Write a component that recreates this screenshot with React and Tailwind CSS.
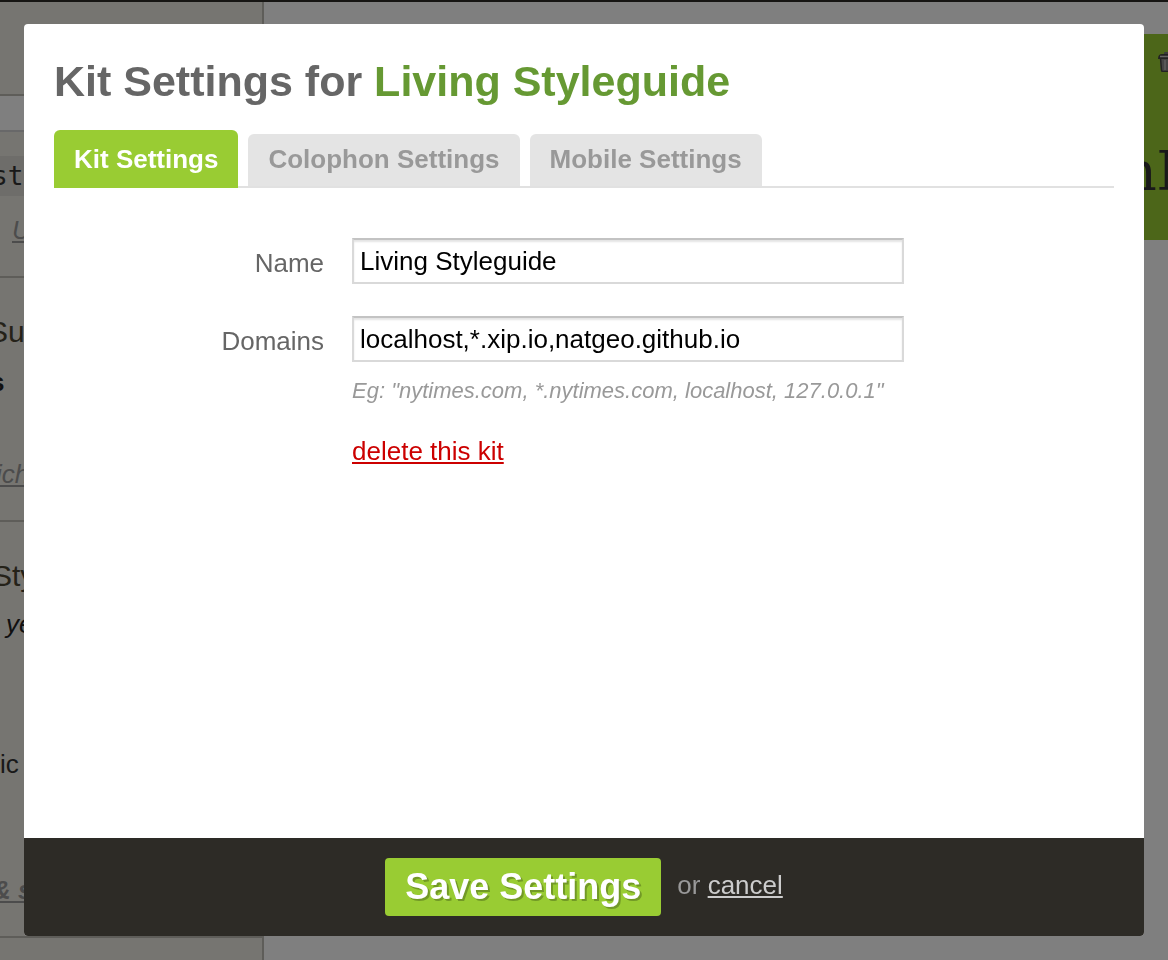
import React, { useState } from "react";

const TABS = ["Kit Settings", "Colophon Settings", "Mobile Settings"];

function TrashIcon() {
  return (
    <svg viewBox="0 0 18 20" className="h-5 w-[18px] shrink-0" aria-hidden="true">
      <rect x="6" y="0" width="6" height="3" rx="1" fill="#777" />
      <path d="M2 6h14l-1 12q0 2-2 2H5q-2 0-2-2z" fill="#888" />
      <path d="M2.500 6l1 12q0 1.500 1.500 1.500h8q1.500 0 1.500-1.500l1-12" fill="none" stroke="#444" strokeWidth="1.500" />
      <path d="M7 8v10M11 8v10" stroke="#bbb" strokeWidth="1.500" />
      <path d="M0 7Q0 2 4 2h10q4 0 4 5z" fill="#444" />
      <path d="M2 4.500h14" stroke="#ccc" strokeWidth="1.500" />
    </svg>
  );
}

function Sidebar() {
  return (
    <aside className="flex w-[264px] shrink-0 flex-col border-r-2 border-[#bcbab3] bg-[#ecebe3] text-[26px] leading-8 text-[#333]">
      <div className="h-[94px] shrink-0 border-b-2 border-[#bcbab3]" />
      <div className="h-9 shrink-0 border-b-2 border-[#d0d0d2] bg-white" />
      <div className="shrink-0 border-b-2 border-[#bcbab3] pt-6">
        <div className="bg-[#dcdbd4] py-1 font-['DejaVu_Sans_Mono']">
          <p className="-ml-2">ste</p>
        </div>
        <p className="px-3 pt-[18px] pb-[30px] italic text-[#999] underline decoration-2 underline-offset-2">Us</p>
      </div>
      <div className="shrink-0 border-b-2 border-[#bcbab3] pt-9 pb-[30px]">
        <h2 className="-ml-3 text-[30px] leading-9 text-[#4a4433]">Sub</h2>
        <p className="-ml-2.5 pt-4 font-bold text-[#222]">s</p>
        <p className="-ml-1 pt-[60px] italic text-[#999] underline decoration-2 underline-offset-2">ich</p>
      </div>
      <div className="shrink-0 border-b-2 border-[#bcbab3] pt-9 pb-[30px]">
        <h2 className="-ml-2 text-[30px] leading-9 text-[#4a4433]">Sty</h2>
        <p className="px-1.5 pt-3.5 italic text-[#222]">ye</p>
        <p className="pt-[108px] text-[#333]">ic</p>
        <p className="-ml-2 pt-[94px] font-bold italic text-[#999] underline decoration-2 underline-offset-2">&amp; s</p>
      </div>
    </aside>
  );
}

function Page() {
  return (
    <div className="fixed inset-0 flex flex-col overflow-hidden border-t-2 border-[#2d2b26] bg-white" aria-hidden="true">
      <div className="flex min-h-0 flex-1">
        <Sidebar />
        <main className="flex-1 pt-8">
          <div className="-mr-2 flex flex-col items-end bg-[#99cc33] pt-[18px] pb-8">
            <TrashIcon />
            <p className="-mr-7 pt-16 font-['DejaVu_Serif'] text-[54px] leading-[72px] text-[#333]">nN</p>
          </div>
        </main>
      </div>
    </div>
  );
}

function Field({ id, label, value, hint }) {
  const [text, setText] = useState(value);
  return (
    <div className="flex gap-7">
      <label htmlFor={id} className="w-[270px] shrink-0 pt-[9px] text-right text-[26px] leading-8 text-[#666]">
        {label}
      </label>
      <div className="min-w-0 flex-1">
        <input
          id={id}
          type="text"
          value={text}
          onChange={(e) => setText(e.target.value)}
          className="block h-[46px] w-full max-w-[552px] border-2 border-[#d9d9d9] border-t-[#c3c3c3] bg-white px-1.5 text-[26px] text-black shadow-[inset_0_2px_2px_#e4e4e4] outline-none"
        />
        {hint && <p className="pt-[15px] text-[22px] leading-7 italic text-[#999]">{hint}</p>}
      </div>
    </div>
  );
}

export default function App() {
  const [tab, setTab] = useState(TABS[0]);
  return (
    <div className="font-['Liberation_Sans',Arial,sans-serif]">
      <Page />
      <div className="relative flex min-h-screen bg-black/50 p-6">
        <div role="dialog" aria-labelledby="title" className="flex flex-1 flex-col overflow-hidden rounded-[4px] bg-white">
          <div className="flex-1 px-[30px] pt-8">
            <h1 id="title" className="text-[43px] leading-[50px] font-bold text-[#666]">
              Kit Settings for <span className="text-[#669933]">Living Styleguide</span>
            </h1>
            <div role="tablist" className="mt-6 flex items-end gap-2.5 border-b-2 border-[#e1e1e1]">
              {TABS.map((name) => (
                <button
                  key={name}
                  type="button"
                  role="tab"
                  aria-selected={name === tab}
                  onClick={() => setTab(name)}
                  className={
                    name === tab
                      ? "-mb-0.5 rounded-t-[6px] bg-[#99cc33] px-5 pt-3.5 pb-3.5 text-[26px] leading-[30px] font-bold text-white"
                      : "rounded-t-[6px] bg-[#e4e4e4] px-5 pt-2.5 pb-3 text-[26px] leading-[30px] font-bold text-[#999]"
                  }
                >
                  {name}
                </button>
              ))}
            </div>
            <form className="flex flex-col gap-8 pt-[50px]">
              <Field id="name" label="Name" value="Living Styleguide" />
              <Field
                id="domains"
                label="Domains"
                value="localhost,*.xip.io,natgeo.github.io"
                hint={'Eg: "nytimes.com, *.nytimes.com, localhost, 127.0.0.1"'}
              />
              <a href="#delete" className="-mt-0.5 ml-[298px] self-start text-[26px] leading-8 text-[#cc0000] underline decoration-2 underline-offset-2">
                delete this kit
              </a>
            </form>
          </div>
          <footer className="flex items-center justify-center gap-4 bg-[#2d2b26] py-5">
            <button type="button" className="rounded-[4px] bg-[#99cc33] px-5 pt-2 pb-2 text-[36px] leading-[42px] font-bold text-white [text-shadow:2px_2px_0_#729926]">
              Save Settings
            </button>
            <p className="pb-1 text-[26px] leading-8 text-[#999]">
              or{" "}
              <a href="#cancel" className="text-[#ccc] underline decoration-2 underline-offset-2">
                cancel
              </a>
            </p>
          </footer>
        </div>
      </div>
    </div>
  );
}
